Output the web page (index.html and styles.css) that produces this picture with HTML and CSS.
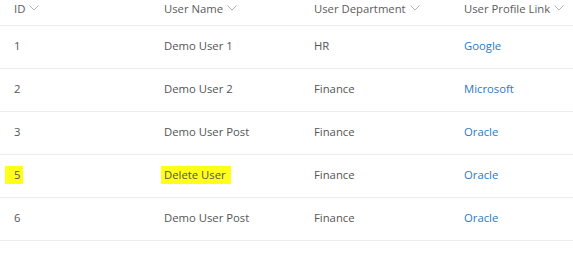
FILE: index.html
```html
<!DOCTYPE html>
<html lang="en">
<head>
    <meta charset="UTF-8">
    <meta name="viewport" content="width=device-width, initial-scale=1.0">
    <title>Users</title>
    <link rel="stylesheet" href="styles.css">
</head>
<body>
    <table class="user-list">
        <thead>
            <tr>
                <th>ID<svg class="chevron" viewBox="0 0 10 6"><polyline points="0.5,0.5 5,5 9.5,0.5"/></svg></th>
                <th>User Name<svg class="chevron" viewBox="0 0 10 6"><polyline points="0.5,0.5 5,5 9.5,0.5"/></svg></th>
                <th>User Department<svg class="chevron" viewBox="0 0 10 6"><polyline points="0.5,0.5 5,5 9.5,0.5"/></svg></th>
                <th>User Profile Link<svg class="chevron" viewBox="0 0 10 6"><polyline points="0.5,0.5 5,5 9.5,0.5"/></svg></th>
            </tr>
        </thead>
        <tbody>
            <tr>
                <td>1</td>
                <td>Demo User 1</td>
                <td>HR</td>
                <td><a href="#">Google</a></td>
            </tr>
            <tr>
                <td>2</td>
                <td>Demo User 2</td>
                <td>Finance</td>
                <td><a href="#">Microsoft</a></td>
            </tr>
            <tr>
                <td>3</td>
                <td>Demo User Post</td>
                <td>Finance</td>
                <td><a href="#">Oracle</a></td>
            </tr>
            <tr>
                <td><span class="mark mark-id">5</span></td>
                <td><span class="mark mark-name">Delete User</span></td>
                <td>Finance</td>
                <td><a href="#">Oracle</a></td>
            </tr>
            <tr>
                <td>6</td>
                <td>Demo User Post</td>
                <td>Finance</td>
                <td><a href="#">Oracle</a></td>
            </tr>
        </tbody>
    </table>
</body>
</html>
```
FILE: styles.css
```css
body {
    margin: 0;
    padding: 0;
    background-color: #fff;
    font-family: "Open Sans", "Noto Sans", Arial, sans-serif;
    font-size: 11.3px;
    color: #555;
}
.user-list {
    border-collapse: collapse;
    table-layout: fixed;
    width: 600px;
}
.user-list th,
.user-list td {
    width: 150px;
    padding: 0 0 0 14px;
    text-align: left;
    white-space: nowrap;
    box-sizing: border-box;
}
.user-list th {
    height: 25px;
    font-weight: normal;
    color: #5c5c5c;
    vertical-align: top;
    padding-top: 1px;
    border-bottom: 1px solid #ececec;
}
.user-list td {
    height: 43px;
    padding-bottom: 2px;
    border-bottom: 1px solid #ececec;
}
.chevron {
    width: 10px;
    height: 6px;
    margin-left: 4px;
    vertical-align: 2px;
    fill: none;
    stroke: #b4b4b4;
    stroke-width: 1;
}
a {
    color: #2a7ac4;
    text-decoration: none;
}
.mark {
    display: inline-block;
    background-color: #ffff1a;
    line-height: 18px;
}
.mark-id {
    margin-left: -9px;
    padding: 0 3px 0 9px;
}
.mark-name {
    margin-left: -3px;
    padding: 0 5px 0 3px;
}
```
